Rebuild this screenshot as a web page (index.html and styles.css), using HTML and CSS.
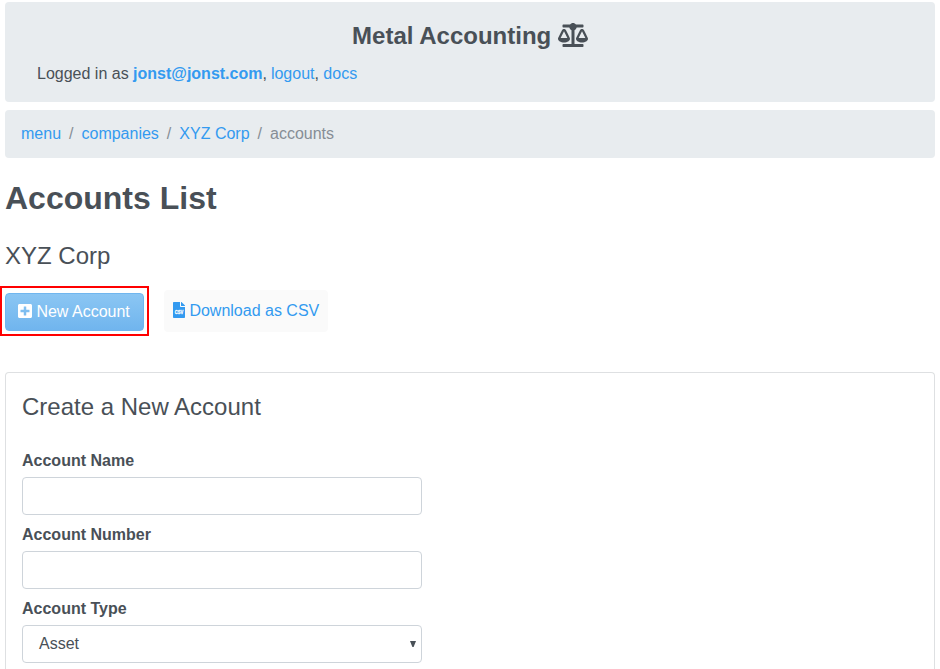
FILE: index.html
```html
<!DOCTYPE html>
<html lang="en">
<head>
<meta charset="utf-8">
<title>Metal Accounting</title>
<link rel="stylesheet" href="styles.css">
</head>
<body>
<header class="banner">
  <h1 class="brand">Metal Accounting
    <svg class="icon-scale" viewBox="0 0 640 512" fill="currentColor"><path d="M256 336h-.02c0-16.18 1.34-8.73-85.05-181.51-17.65-35.29-68.19-35.36-85.87 0C-2.06 328.75.02 320.33.02 336H0c0 44.18 57.31 80 128 80s128-35.82 128-80zM128 176l72 144H56l72-144zm511.98 160c0-16.18 1.34-8.73-85.05-181.51-17.65-35.29-68.19-35.36-85.87 0-87.12 174.26-85.04 165.84-85.04 181.51H384c0 44.18 57.31 80 128 80s128-35.82 128-80h-.02zM440 320l72-144 72 144H440zm88 128H352V153.25c23.51-10.29 41.16-31.48 46.39-57.25H528c8.84 0 16-7.16 16-16V48c0-8.84-7.16-16-16-16H383.64C369.04 12.68 346.09 0 320 0s-49.04 12.68-63.64 32H112c-8.84 0-16 7.16-16 16v32c0 8.84 7.16 16 16 16h129.61c5.23 25.76 22.87 46.96 46.39 57.25V448H112c-8.84 0-16 7.16-16 16v32c0 8.84 7.16 16 16 16h416c8.84 0 16-7.16 16-16v-32c0-8.84-7.16-16-16-16z"/></svg></h1>
  <p class="session">Logged in as <a href="#"><b>jonst@jonst.com</b></a><span class="tight">,</span> <a href="#">logout</a>, <a href="#">docs</a></p>
</header>
<nav class="breadcrumb">
  <a href="#">menu</a><span>/</span><a href="#">companies</a><span>/</span><a href="#">XYZ Corp</a><span>/</span><em>accounts</em>
</nav>
<h2 class="page-title">Accounts List</h2>
<h3 class="company">XYZ Corp</h3>
<div class="actions">
  <div class="highlight">
    <button class="btn-new"><svg class="icon-plus" viewBox="0 0 448 512" fill="currentColor"><path d="M400 32H48C21.5 32 0 53.5 0 80v352c0 26.5 21.5 48 48 48h352c26.5 0 48-21.5 48-48V80c0-26.5-21.5-48-48-48zm-32 252c0 6.6-5.4 12-12 12h-92v92c0 6.6-5.4 12-12 12h-56c-6.6 0-12-5.4-12-12v-92H92c-6.6 0-12-5.4-12-12v-56c0-6.6 5.4-12 12-12h92v-92c0-6.6 5.4-12 12-12h56c6.6 0 12 5.4 12 12v92h92c6.600 0 12 5.400 12 12v56z"/></svg>New Account</button>
  </div>
  <a class="download" href="#"><svg class="icon-file" viewBox="0 0 384 512"><path fill="currentColor" d="M224 136V0H24C10.7 0 0 10.7 0 24v464c0 13.3 10.7 24 24 24h336c13.3 0 24-10.7 24-24V160H248c-13.2 0-24-10.8-24-24zM377 105L279.1 7c-4.500-4.500-10.600-7-17-7H256v128h128v-6.100c0-6.300-2.500-12.400-7-16.900z"/><text class="file-label" x="192" y="388" text-anchor="middle" textLength="270" lengthAdjust="spacingAndGlyphs">CSV</text></svg>Download as CSV</a>
</div>
<section class="card">
  <h4 class="card-title">Create a New Account</h4>
  <form>
    <label for="name">Account Name</label>
    <input id="name" type="text">
    <label for="number">Account Number</label>
    <input id="number" type="text">
    <label>Account Type</label>
    <div class="select-box"><span>Asset</span><i class="caret"></i></div>
  </form>
</section>
</body>
</html>
```
FILE: styles.css
```css
* { box-sizing: border-box; }
html { background: #fff; }
body {
  margin: 0;
  padding: 2px 5px 0;
  height: 669px;
  background: #fff;
  color: #495057;
  font: 16px/24px "Liberation Sans", Arial, sans-serif;
}
h1, h2, h3, h4, p { margin: 0; }
a { color: #339af0; text-decoration: none; }

.banner {
  height: 100px;
  padding: 19px 32px 0;
  background: #e8ecef;
  border-radius: 4px;
}
.brand {
  text-align: center;
  font-size: 24px;
  line-height: 29px;
  margin-bottom: 12px;
  white-space: nowrap;
}
.icon-scale { width: 30px; height: 24px; vertical-align: -3px; }
.tight { margin-right: -0.5px; }

.breadcrumb {
  display: flex;
  gap: 8px;
  height: 48px;
  margin-top: 8px;
  padding: 12px 16px;
  background: #e8ecef;
  border-radius: 4px;
  color: #868e96;
}
.breadcrumb em { font-style: normal; }

.page-title { margin-top: 21px; font-size: 32px; line-height: 38px; }
.company { margin-top: 24px; font-size: 24px; line-height: 29px; font-weight: 400; }

.actions { display: flex; align-items: flex-start; margin: 16px 0 0 -5px; }
.highlight { width: 149px; height: 50px; padding: 5px 3px; border: 2px solid #f00; }
.btn-new {
  display: flex;
  align-items: center;
  gap: 4.4px;
  width: 139px;
  height: 38px;
  padding: 0 0 0 12px;
  border: 1px solid #70b6ef;
  border-radius: 4px;
  background: linear-gradient(#8bc6f3, #70b5ee);
  color: #fff;
  font: inherit;
}
.icon-plus { width: 14px; height: 16px; margin-bottom: 2px; }
.download {
  display: flex;
  align-items: center;
  gap: 4.4px;
  width: 164px;
  height: 42px;
  margin: 4px 0 0 15px;
  padding-left: 9px;
  border-radius: 4px;
  background: #fafafa;
  white-space: nowrap;
}
.icon-file { width: 12px; height: 16px; margin-bottom: 2px; }
.file-label {
  font: bold 180px "Liberation Sans", Arial, sans-serif;
  fill: #fff;
  stroke: #fff;
  stroke-width: 10px;
}

.card {
  height: 297px;
  margin-top: 36px;
  padding: 19px 16px 0;
  border: 1px solid #dee0e2;
  border-bottom: 0;
  border-radius: 4px 4px 0 0;
}
.card-title { font-size: 24px; line-height: 29px; font-weight: 400; margin-bottom: 28px; }
label { display: block; height: 24px; margin-bottom: 4px; font-weight: 700; }
input, .select-box {
  display: flex;
  align-items: center;
  justify-content: space-between;
  width: 400px;
  height: 38px;
  margin-bottom: 8px;
  padding: 0 5px 0 16px;
  border: 1px solid #ced4da;
  border-radius: 4px;
  background: #fff;
}
.select-box { margin-bottom: 0; }
.caret { width: 6px; height: 6px; background: #495057; clip-path: polygon(0 0, 100% 0, 60% 100%, 40% 100%); }
```
